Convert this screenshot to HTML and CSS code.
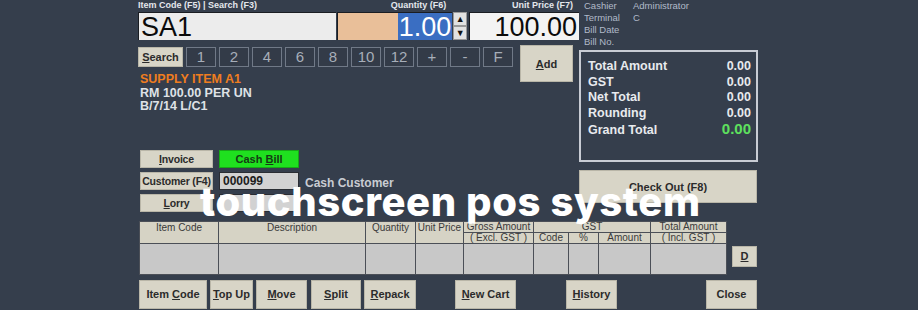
FILE: index.html
```html
<!DOCTYPE html>
<html lang="en">
<head>
    <meta charset="UTF-8">
    <title>Touchscreen POS System</title>
    <link rel="stylesheet" href="styles.css">
</head>
<body>

    <div class="pos">
        <div class="top">
            <!-- Entrada de item -->
            <div class="left">
                <div class="entry">
                    <div class="field f-item">
                        <label>Item Code (F5) | Search (F3)</label>
                        <div class="box item-box">SA1</div>
                    </div>
                    <div class="field f-qty">
                        <label>Quantity (F6)</label>
                        <div class="box qty-box"><span class="sel">1.00</span></div>
                    </div>
                    <div class="spinner">
                        <div class="spin">&#9650;</div>
                        <div class="spin">&#9660;</div>
                    </div>
                    <div class="field f-price">
                        <label>Unit Price (F7)</label>
                        <div class="box price-box">100.00</div>
                    </div>
                </div>

                <div class="mid">
                    <div class="mid-left">
                        <div class="keys">
                            <button class="btn search"><u>S</u>earch</button>
                            <button class="key">1</button>
                            <button class="key">2</button>
                            <button class="key">4</button>
                            <button class="key">6</button>
                            <button class="key">8</button>
                            <button class="key">10</button>
                            <button class="key">12</button>
                            <button class="key">+</button>
                            <button class="key">-</button>
                            <button class="key">F</button>
                        </div>
                        <div class="item-info">
                            <div class="item-name">SUPPLY ITEM A1</div>
                            <div>RM 100.00 PER UN</div>
                            <div>B/7/14 L/C1</div>
                        </div>
                    </div>
                    <button class="btn add"><u>A</u>dd</button>
                </div>

                <div class="customer">
                    <div class="cust-row">
                        <button class="btn side"><u>I</u>nvoice</button>
                        <button class="btn cash">Cash <u>B</u>ill</button>
                    </div>
                    <div class="cust-row">
                        <button class="btn side">Customer (F4)</button>
                        <div class="cust-field">000099</div>
                        <span class="cust-name">Cash Customer</span>
                    </div>
                    <div class="cust-row">
                        <button class="btn side"><u>L</u>orry</button>
                        <div class="cust-field"></div>
                    </div>
                </div>
            </div>

            <!-- Info e totais -->
            <div class="right">
                <div class="info">
                    <span>Cashier</span><span>Administrator</span>
                    <span>Terminal</span><span>C</span>
                    <span>Bill Date</span><span></span>
                    <span>Bill No.</span><span></span>
                </div>
                <div class="totals">
                    <div class="t-row"><span>Total Amount</span><span>0.00</span></div>
                    <div class="t-row"><span>GST</span><span>0.00</span></div>
                    <div class="t-row"><span>Net Total</span><span>0.00</span></div>
                    <div class="t-row"><span>Rounding</span><span>0.00</span></div>
                    <div class="t-row"><span>Grand Total</span><span class="grand">0.00</span></div>
                </div>
                <button class="btn checkout">Check Out (F8)</button>
            </div>
        </div>

        <!-- Carrinho -->
        <div class="cart">
            <table class="grid">
                <colgroup>
                    <col style="width:79px"><col style="width:147px"><col style="width:50px">
                    <col style="width:48px"><col style="width:70px"><col style="width:35px">
                    <col style="width:30px"><col style="width:52px"><col style="width:76px">
                </colgroup>
                <thead>
                    <tr>
                        <th rowspan="2" class="tall">Item Code</th>
                        <th rowspan="2" class="tall">Description</th>
                        <th rowspan="2" class="tall">Quantity</th>
                        <th rowspan="2" class="tall">Unit Price</th>
                        <th>Gross Amount</th>
                        <th colspan="3">GST</th>
                        <th>Total Amount</th>
                    </tr>
                    <tr>
                        <th>( Excl. GST )</th>
                        <th>Code</th>
                        <th>%</th>
                        <th>Amount</th>
                        <th>( Incl. GST )</th>
                    </tr>
                </thead>
                <tbody>
                    <tr>
                        <td></td><td></td><td></td><td></td><td></td><td></td><td></td><td></td><td></td>
                    </tr>
                </tbody>
            </table>
            <button class="btn d-btn"><u>D</u></button>
        </div>

        <div class="actions">
            <button class="btn act w-code">Item <u>C</u>ode</button>
            <button class="btn act w-top"><u>T</u>op Up</button>
            <button class="btn act w-move"><u>M</u>ove</button>
            <button class="btn act w-split"><u>S</u>plit</button>
            <button class="btn act w-repack"><u>R</u>epack</button>
            <button class="btn act w-new"><u>N</u>ew Cart</button>
            <button class="btn act w-hist"><u>H</u>istory</button>
            <button class="btn act w-close">Close</button>
        </div>
    </div>

    <div class="banner">touchscreen pos system</div>

</body>
</html>
```

FILE: styles.css
```css
* {
    box-sizing: border-box;
}
body {
    margin: 0;
    width: 918px;
    height: 310px;
    overflow: hidden;
    background-color: #353e4c;
    font-family: "Liberation Sans", Arial, sans-serif;
    position: relative;
}
button {
    font-family: inherit;
    padding: 0;
    margin: 0;
    white-space: nowrap;
    cursor: pointer;
}
.pos {
    width: 620px;
    margin-left: 138px;
}
.top {
    display: flex;
}
.left {
    width: 441px;
}
.right {
    width: 179px;
}

/* entrada */
.entry {
    display: flex;
    align-items: flex-end;
}
.field {
    display: flex;
    flex-direction: column;
}
.field label {
    height: 12px;
    font-size: 9px;
    font-weight: bold;
    line-height: 11px;
    color: #e4e7ec;
    white-space: nowrap;
}
.f-item { width: 198px; margin-right: 1px; }
.f-qty { width: 116px; margin-right: 1px; }
.f-qty label { text-align: right; padding-right: 6px; }
.f-price { width: 110px; margin-left: 2px; }
.f-price label { text-align: right; padding-right: 6px; }
.box {
    height: 28px;
    font-size: 27px;
    line-height: 28px;
    color: #0b0b0b;
    border-top: 1px solid #1a1d22;
    border-left: 1px solid #1a1d22;
}
.item-box {
    background-color: #ececec;
    padding-left: 2px;
}
.qty-box {
    background-color: #e9bf99;
    text-align: right;
}
.qty-box .sel {
    display: inline-block;
    height: 27px;
    background-color: #3a6ec2;
    color: #ffffff;
    padding: 0 1px;
}
.price-box {
    background-color: #f3f3f3;
    text-align: right;
    padding-right: 2px;
}
.spinner {
    width: 14px;
    height: 28px;
    display: flex;
    flex-direction: column;
    background-color: #e2e2e2;
}
.spin {
    height: 14px;
    font-size: 9px;
    line-height: 13px;
    text-align: center;
    color: #111111;
    border: 1px solid #9a9a9a;
}

/* teclado */
.mid {
    display: flex;
    margin-top: 5px;
}
.mid-left {
    width: 382px;
}
.keys {
    display: flex;
    gap: 3px;
    margin-top: 2px;
}
.btn {
    background-color: #d8d5c7;
    border: 1px solid #b9b6a8;
    color: #2b2b2b;
    font-size: 11px;
    font-weight: bold;
}
.search {
    width: 45px;
    height: 20px;
}
.key {
    width: 30px;
    height: 20px;
    background-color: #333b48;
    border: 1px solid #707987;
    color: #a7aeb9;
    font-size: 15px;
    line-height: 18px;
}
.add {
    width: 53px;
    height: 37px;
}
.item-info {
    margin-top: 6px;
    font-size: 12.5px;
    font-weight: bold;
    line-height: 13.5px;
    color: #dfe2e7;
    padding-left: 2px;
}
.item-name {
    color: #ef7d1f;
}

/* cliente */
.customer {
    margin-top: 36px;
    padding-left: 2px;
    display: flex;
    flex-direction: column;
    gap: 4px;
}
.cust-row {
    display: flex;
    align-items: center;
    gap: 6px;
    height: 18px;
}
.side {
    width: 73px;
    height: 18px;
    font-size: 10.5px;
    letter-spacing: -0.2px;
}
.cash {
    width: 80px;
    height: 18px;
    background-color: #1fe01f;
    border-color: #17a817;
    color: #153a15;
}
.cust-field {
    width: 80px;
    height: 18px;
    background-color: #d2d2d2;
    border: 1px solid #2a2d33;
    font-size: 12px;
    font-weight: bold;
    line-height: 16px;
    color: #1d1d1d;
    padding-left: 3px;
}
.cust-name {
    font-size: 12px;
    font-weight: bold;
    color: #c9ccd2;
    margin-top: 5px;
}

/* lado direito */
.info {
    display: grid;
    grid-template-columns: 49px 1fr;
    padding-left: 5px;
    font-size: 9.5px;
    line-height: 12px;
    color: #b1bac9;
    height: 48px;
}
.totals {
    margin-top: 2px;
    height: 112px;
    border: 2px solid #c8ccd4;
    padding: 7px 5px 0 7px;
}
.t-row {
    display: flex;
    justify-content: space-between;
    align-items: baseline;
    font-size: 12.5px;
    font-weight: bold;
    line-height: 15.5px;
    color: #e8eaee;
}
.grand {
    font-size: 15px;
    color: #5ee15e;
}
.checkout {
    margin-top: 8px;
    width: 178px;
    height: 33px;
}

/* carrinho */
.cart {
    display: flex;
    align-items: flex-start;
    margin-top: 9px;
    padding-left: 1px;
}
.grid {
    width: 587px;
    border-collapse: collapse;
    table-layout: fixed;
}
.grid th {
    background-color: #d6d3c5;
    border: 1px solid #4b4f57;
    font-size: 10px;
    font-weight: normal;
    color: #3a3a3a;
    height: 11px;
    line-height: 9px;
    padding: 0;
    white-space: nowrap;
    overflow: hidden;
}
.grid th.tall {
    vertical-align: top;
    padding-top: 1px;
}
.grid td {
    background-color: #c8c8c8;
    border: 1px solid #4b4f57;
    height: 31px;
    padding: 0;
}
.d-btn {
    width: 25px;
    height: 21px;
    margin-top: 25px;
    margin-left: 5px;
}

/* botoes de baixo */
.actions {
    display: flex;
    margin-top: 5px;
    padding-left: 1px;
    gap: 3px;
}
.act {
    height: 29px;
}
.w-code { width: 68px; }
.w-top { width: 43px; }
.w-move { width: 51px; }
.w-split { width: 50px; margin-left: 1px; }
.w-repack { width: 52px; }
.w-new { width: 61px; margin-left: 36px; }
.w-hist { width: 51px; margin-left: 47px; }
.w-close { width: 51px; margin-left: 86px; }

/* titulo por cima */
.banner {
    position: absolute;
    left: 200px;
    top: 178px;
    font-family: Inter, "Open Sans", sans-serif;
    font-size: 40px;
    font-weight: 800;
    line-height: 48px;
    color: #ffffff;
    letter-spacing: 0.6px;
    white-space: nowrap;
}
```
